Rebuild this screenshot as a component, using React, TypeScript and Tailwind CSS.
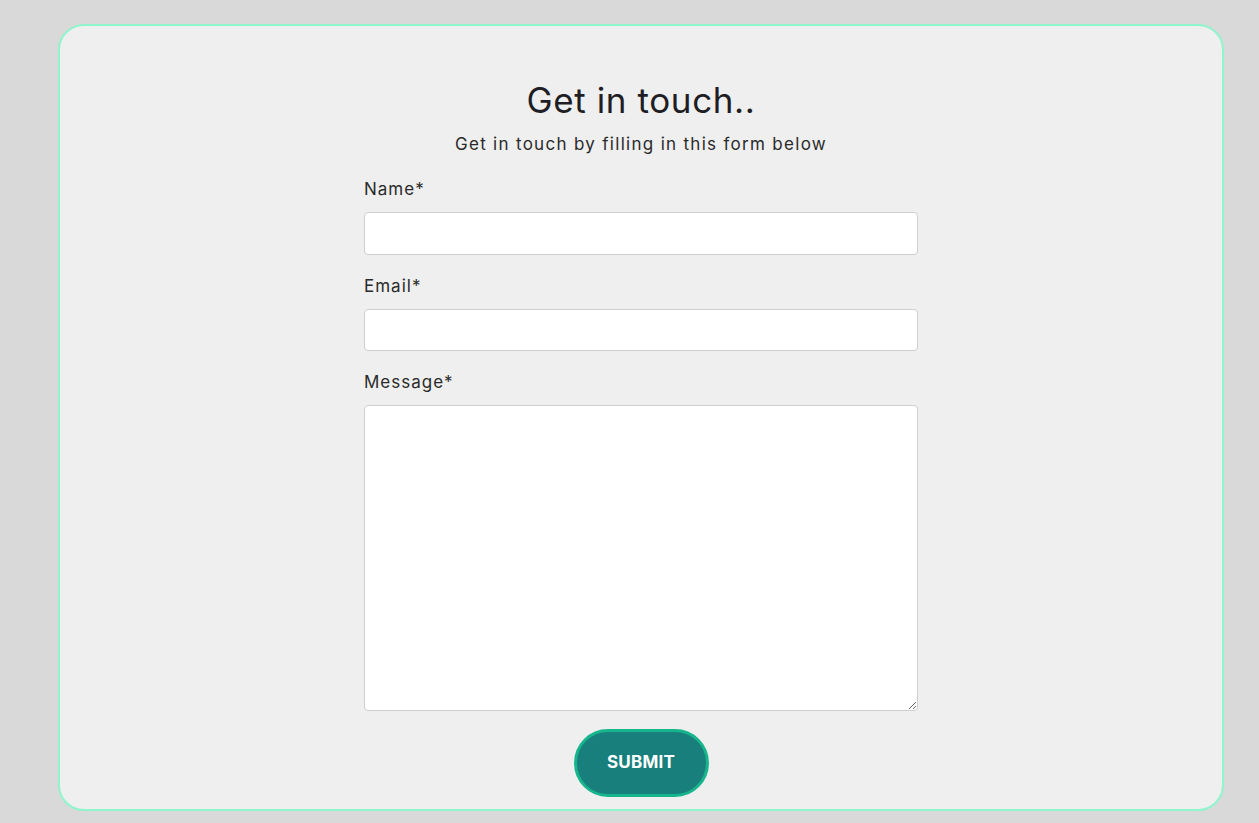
import React from "react";

export default function App() {
  return (
    <div className="min-h-[823px] w-full bg-[#d9d9d9] pt-[24px] pl-[58px]" style={{ fontFamily: "Inter, 'Noto Sans', sans-serif" }}>
      <div className="w-[1166px] h-[787px] rounded-[26px] border-2 border-[#8ff5cd] bg-[#efefef] flex flex-col items-center pt-[52px]">
        <h1 className="text-[35px] leading-[44px] text-[#1e1e24] font-normal tracking-[0.6px]">Get in touch..</h1>
        <p className="mt-[10px] text-[17px] leading-[24px] text-[#2a2a2a] tracking-[1.3px]">Get in touch by filling in this form below</p>
        <form className="mt-[22px] w-[554px] flex flex-col" onSubmit={(e) => e.preventDefault()}>
          <label className="text-[17px] leading-[22px] text-[#2a2a2a] tracking-[1px]">Name*</label>
          <input className="mt-[12px] h-[43px] rounded-[4px] border border-[#cfcfcf] bg-white" />
          <label className="mt-[20px] text-[17px] leading-[22px] text-[#2a2a2a] tracking-[1px]">Email*</label>
          <input className="mt-[12px] h-[42px] rounded-[4px] border border-[#cfcfcf] bg-white" />
          <label className="mt-[20px] text-[17px] leading-[22px] text-[#2a2a2a] tracking-[1px]">Message*</label>
          <textarea className="mt-[12px] h-[306px] rounded-[4px] border border-[#cfcfcf] bg-white resize-y" />
          <div className="flex justify-center mt-[18px]">
            <button className="w-[135px] h-[68px] rounded-full border-[3px] border-[#16b58c] bg-[#187f7c] text-white font-bold text-[17px] tracking-[0.2px]">SUBMIT</button>
          </div>
        </form>
      </div>
    </div>
  );
}
